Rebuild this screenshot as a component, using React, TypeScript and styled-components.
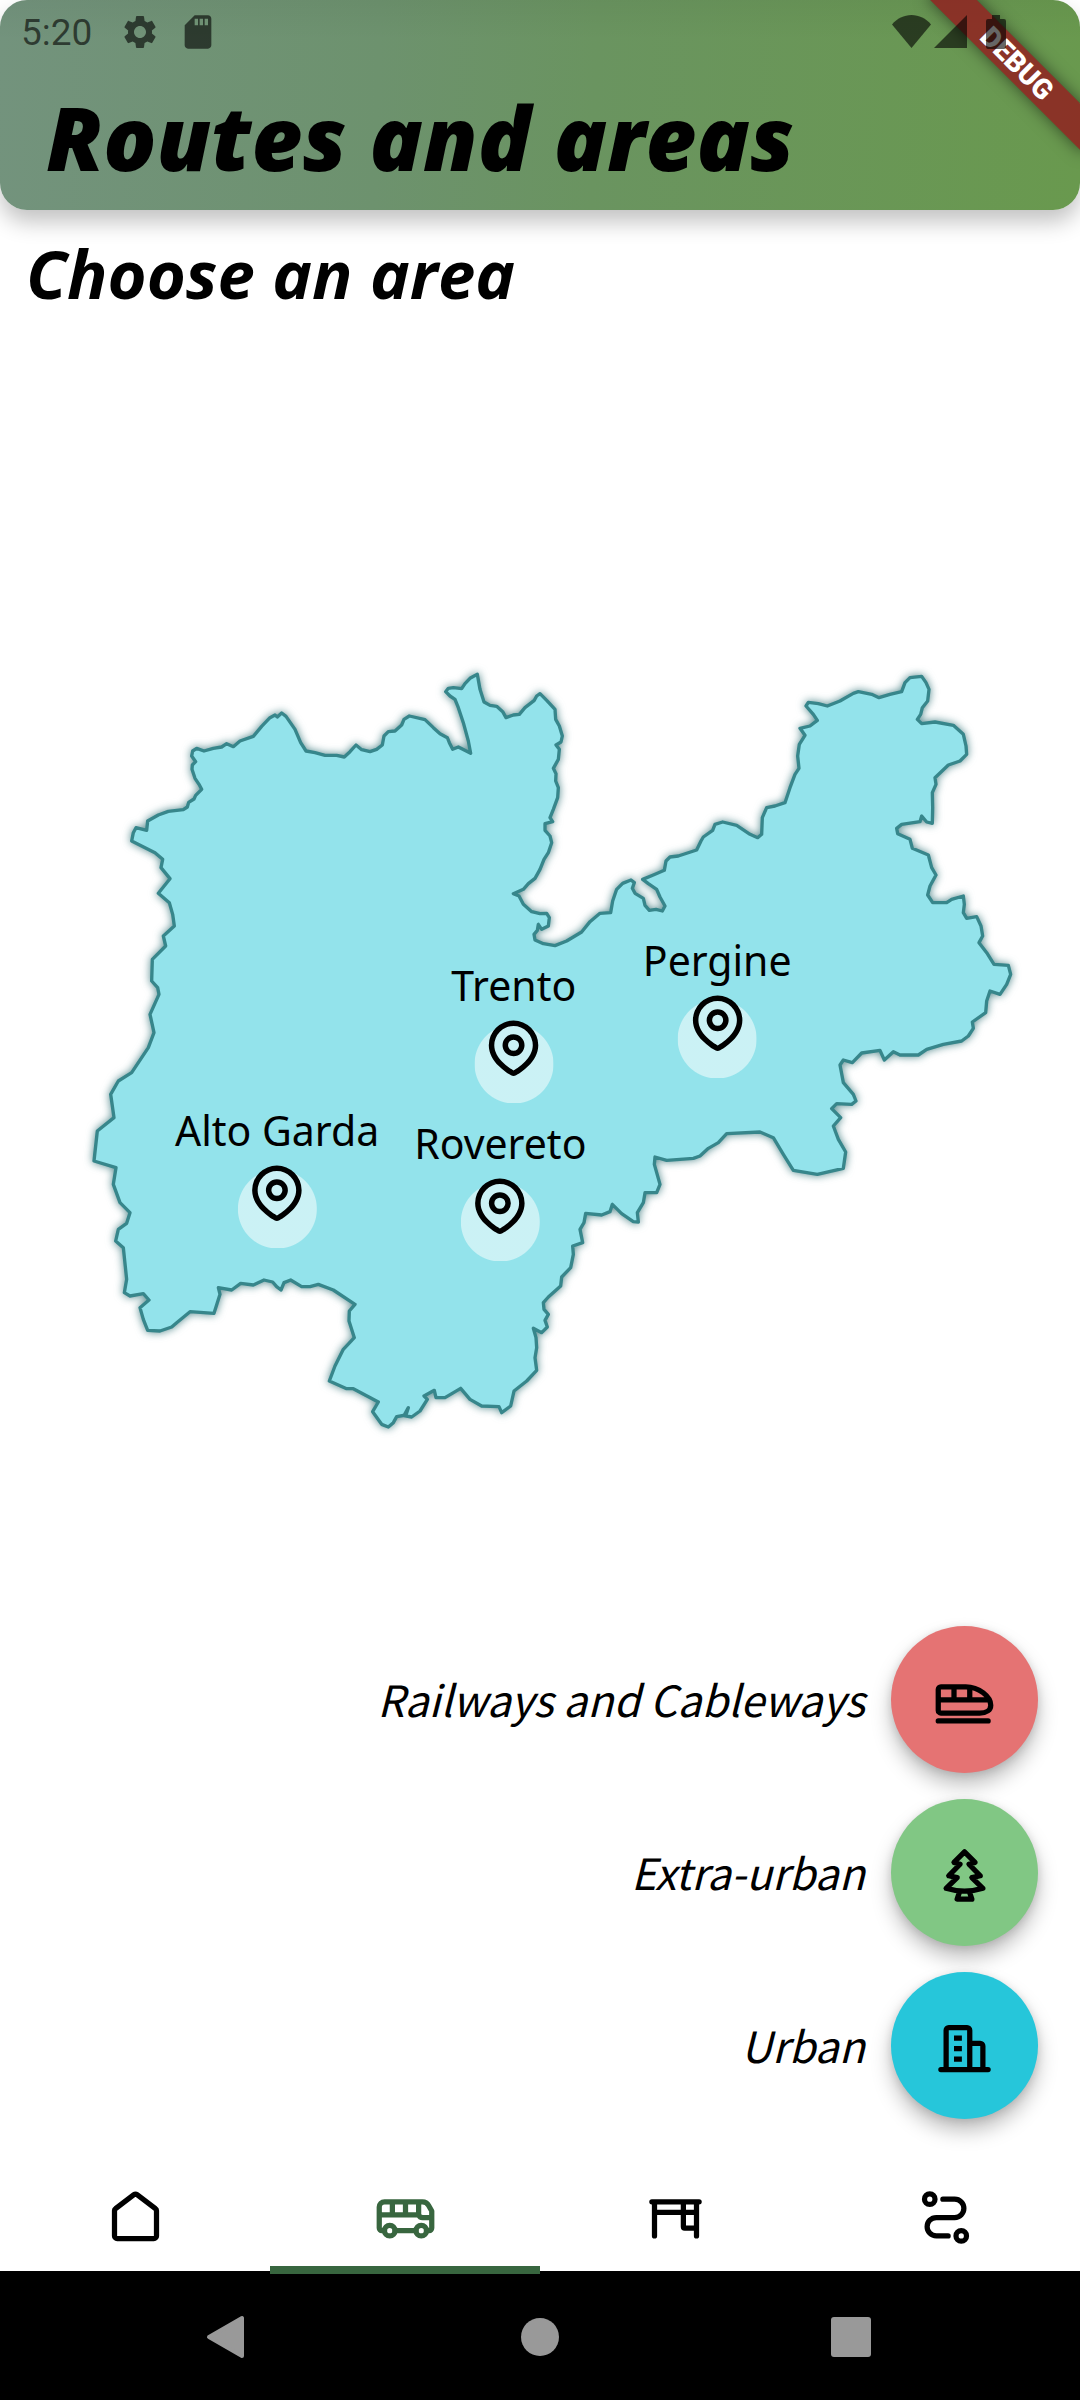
import React from "react";
import styled, { createGlobalStyle } from "styled-components";

const GlobalStyle = createGlobalStyle`
  * { box-sizing: border-box; }
  body { margin: 0; background: #fff; color: #000; font-family: "Noto Sans", "Open Sans", sans-serif; }
  button { border: 0; padding: 0; background: none; color: inherit; font: inherit; cursor: pointer; }
`;

const Page = styled.div`
  position: relative;
  display: flex;
  flex-direction: column;
  min-height: 100vh;
  overflow: hidden;
`;

/* ---------- header ---------- */

const Header = styled.header`
  height: 210px;
  border-radius: 27px;
  background:
    linear-gradient(180deg, rgba(0, 0, 0, 0.04), rgba(0, 0, 0, 0) 40px),
    linear-gradient(92deg, #73937d, #6d926e 35%, #6a9460 55%, #69994e);
  box-shadow: 0 12px 22px rgba(0, 0, 0, 0.24);
`;

const StatusBar = styled.div`
  position: relative;
  z-index: 2;
  display: flex;
  align-items: center;
  height: 63px;
  padding: 0 74px 0 21px;
  color: rgba(0, 0, 0, 0.6);
`;

const Clock = styled.time`
  margin-right: 28px;
  padding-top: 2px;
  font: 400 37px/44px Roboto, sans-serif;
`;

const StatusIcons = styled.div<{ $gap: number }>`
  display: flex;
  align-items: center;
  gap: ${(p) => p.$gap}px;
`;

const Spacer = styled.div`
  flex: 1;
`;

const Title = styled.h1`
  margin: 0;
  padding: 0 46px;
  font: italic 800 88px/148px "Open Sans", sans-serif;
  white-space: nowrap;
`;

const BannerLayer = styled.div`
  position: absolute;
  top: 0;
  right: 0;
  z-index: 1;
  width: 200px;
  height: 200px;
  overflow: hidden;
  pointer-events: none;
`;

const Banner = styled.div`
  position: absolute;
  top: 47px;
  right: -47px;
  width: 220px;
  transform: rotate(45deg);
  background: rgba(150, 18, 26, 0.75);
  box-shadow: 0 0 16px rgba(0, 0, 0, 0.5);
  color: #fff;
  font: 900 28px/33px Roboto, sans-serif;
  text-align: center;
`;

/* ---------- map ---------- */

const Heading = styled.h2`
  margin: 0;
  padding: 0 26px;
  font: italic 700 67px/126px "Open Sans", sans-serif;
`;

const MapArea = styled.section`
  flex: 1;
  display: flex;
  align-items: flex-end;
  padding: 0 100px 145px 80px;
`;

const MapCanvas = styled.div`
  position: relative;
  flex: 1;
`;

const Region = styled.svg`
  display: block;
  width: 100%;
  overflow: visible;
  filter: drop-shadow(0 0 4px rgba(30, 100, 105, 0.75));
`;

const Marker = styled.button<{ $x: number; $y: number }>`
  position: absolute;
  left: ${(p) => p.$x}%;
  top: ${(p) => p.$y}%;
  transform: translate(-50%, -100%);
  display: flex;
  flex-direction: column;
  align-items: center;
  gap: 3px;
  font-size: 41px;
  line-height: 54px;
  white-space: nowrap;
`;

const MarkerDot = styled.span`
  display: grid;
  justify-items: center;
  height: 88px;
  width: 79px;
  background: radial-gradient(circle at 50% 49px, rgba(255, 255, 255, 0.52) 39px, transparent 40px);
`;

/* ---------- actions ---------- */

const Actions = styled.section`
  display: flex;
  flex-direction: column;
  align-items: flex-end;
  gap: 26px;
  padding: 0 42px 44px 0;
`;

const Action = styled.button`
  display: flex;
  align-items: center;
  gap: 26px;
  font-family: "Noto Sans CJK JP", "Noto Sans", sans-serif;
  font-style: italic;
  font-size: 43px;
  line-height: 56px;
`;

const ActionLabel = styled.span`
  padding-bottom: 4px;
`;

const ActionDisc = styled.span<{ $color: string }>`
  display: flex;
  align-items: center;
  justify-content: center;
  width: 147px;
  height: 147px;
  padding-top: 6px;
  border-radius: 50%;
  background: ${(p) => p.$color};
  box-shadow: 0 12px 20px rgba(0, 0, 0, 0.25), 0 2px 8px rgba(0, 0, 0, 0.12);
`;

/* ---------- navigation ---------- */

const TabBar = styled.nav`
  position: relative;
  z-index: 1;
  display: grid;
  grid-template-columns: repeat(4, 1fr);
  height: 108px;
`;

const Tab = styled.a<{ $active: boolean }>`
  display: flex;
  justify-content: center;
  align-items: center;
  height: 111px;
  color: ${(p) => (p.$active ? "#38663f" : "#000")};
  border-bottom: 8px solid ${(p) => (p.$active ? "#38663f" : "transparent")};
  padding-top: 5px;
`;

const SystemBar = styled.div`
  display: grid;
  grid-template-columns: repeat(3, 1fr);
  height: 129px;
  padding: 2px 74px 0;
  background: #000;
  color: #999;
`;

const SystemButton = styled.button`
  display: flex;
  align-items: center;
  justify-content: center;
`;

const Glyph = ({ size = 63, children }: { size?: number; children: React.ReactNode }) => (
  <svg width={size} height={size} viewBox="0 0 24 24" fill="none" stroke="currentColor"
    strokeWidth="2" strokeLinecap="round" strokeLinejoin="round" aria-hidden="true">
    {children}
  </svg>
);

const PinGlyph = () => (
  <svg width="66" height="66" viewBox="0 0 24 24" fill="currentColor" fillRule="evenodd" aria-hidden="true">
    <path d="M12 2a9 9 0 0 1 9 9c0 3.074-1.676 5.59-3.442 7.395a20.4 20.4 0 0 1-2.876 2.416l-.426.29-.2.133-.377.24-.336.205-.416.242a1.87 1.87 0 0 1-1.854 0l-.416-.242-.52-.32-.192-.125-.41-.273a20.6 20.6 0 0 1-3.093-2.566C4.676 16.589 3 14.074 3 11a9 9 0 0 1 9-9m0 2a7 7 0 0 0-7 7c0 2.322 1.272 4.36 2.871 5.996a18 18 0 0 0 2.222 1.91l.458.326.427.288.39.25.343.209.289.169.455-.269.367-.23q.293-.186.627-.417l.458-.326a18 18 0 0 0 2.222-1.91C17.728 15.361 19 13.322 19 11a7 7 0 0 0-7-7m0 3a4 4 0 1 1 0 8 4 4 0 0 1 0-8m0 2a2 2 0 1 0 0 4 2 2 0 0 0 0-4" />
  </svg>
);

const TrainGlyph = () => (
  <Glyph>
    <path d="M3 6h9.500C17.500 6 22 9.800 22 13c0 1.900-1.700 3-4.200 3H3a1 1 0 0 1-1-1V7a1 1 0 0 1 1-1ZM2 11h19M2 19h19" />
    <path d="M8 6v5M14 6v5" strokeLinecap="butt" />
  </Glyph>
);

const TreeGlyph = () => (
  <Glyph>
    <path d="M12 3 8 7l2.300.700-4.300 4.400 3.200.700-4.200 4.100c4.500 1.400 9.500 1.400 14 0l-4.200-4.100 3.200-.700-4.300-4.400L16 7ZM10.100 18.300 9.200 21h5.600l-.9-2.700" />
  </Glyph>
);

const BuildingGlyph = () => (
  <Glyph>
    <path d="M3 20h18M5 20V5a1 1 0 0 1 1-1h7a1 1 0 0 1 1 1v15M14 10h4a1 1 0 0 1 1 1v9" />
    <path d="M8 8h3M8 12h3M8 16h3" strokeLinecap="butt" />
  </Glyph>
);

const HomeGlyph = () => (
  <Glyph>
    <path d="M4 9.300c0-.3.100-.5.400-.7l7-5.300a1 1 0 0 1 1.200 0l7 5.300c.3.200.4.400.4.700V19a1 1 0 0 1-1 1H5a1 1 0 0 1-1-1Z" />
  </Glyph>
);

const BusGlyph = () => (
  <Glyph>
    <path d="M4 17H3a1 1 0 0 1-1-1V8a2 2 0 0 1 2-2h14.500c1 0 1.800.500 2.300 1.400L22 9.500V16a1 1 0 0 1-1 1h-1M8 17h8M2 11h15c.3.700.6 1 1.500 1H22M7 6v5M12 6v5M17 6v5" />
    <circle cx="6" cy="17" r="2" />
    <circle cx="18" cy="17" r="2" />
  </Glyph>
);

const DeskGlyph = () => (
  <Glyph>
    <path d="M3 6h18M4 6v13M20 6v13M4 10h16M15 6v9.500a.5.500 0 0 0 .5.500H20" />
  </Glyph>
);

const RouteGlyph = () => (
  <Glyph>
    <path d="M11 5h4.500a3.500 3.500 0 0 1 0 7h-7a3.500 3.500 0 0 0 0 7H13" />
    <circle cx="6" cy="5" r="2" />
    <circle cx="18" cy="19" r="2" />
  </Glyph>
);

const provinceOutline =
  "M155 600 160 575 168 560 200 568 203 540 235 522 265 511 310 506 322 498 326 484 342 474 347 463 365 445 357 430 345 412 336 385 337 372 347 362 335 345 338 330 350 322 372 330 400 322 425 318 440 308 460 317 480 300 520 286 545 256 570 230 585 222 592 228 605 216 618 226 645 265 662 305 678 330 705 335 735 343 770 343 793 348 810 332 828 312 845 326 870 332 890 325 907 312 912 285 925 272 945 270 965 252 972 235 988 225 1035 236 1060 260 1080 278 1102 290 1108 305 1118 325 1135 318 1172 337 1165 300 1150 245 1135 200 1125 175 1110 165 1097 152 1105 142 1120 140 1145 143 1155 128 1170 112 1192 100 1200 145 1212 183 1230 193 1250 196 1268 212 1278 230 1300 222 1318 220 1335 200 1363 178 1370 165 1380 158 1400 178 1425 205 1427 235 1438 255 1447 285 1443 303 1428 312 1438 325 1435 355 1420 382 1428 398 1427 420 1435 440 1433 470 1420 505 1410 530 1418 542 1395 548 1395 568 1410 585 1415 605 1405 635 1392 655 1380 685 1365 712 1345 728 1330 745 1300 758 1317 765 1330 790 1355 812 1380 818 1400 817 1408 830 1405 855 1385 865 1375 850 1372 868 1362 880 1365 897 1390 908 1425 914 1460 900 1505 873 1530 842 1560 817 1592 815 1598 780 1610 745 1628 727 1653 717 1663 725 1657 742 1665 757 1690 772 1695 793 1708 808 1728 805 1747 810 1755 795 1740 768 1730 745 1705 728 1688 715 1720 702 1753 688 1758 660 1770 648 1795 645 1850 627 1863 600 1870 588 1898 568 1905 550 1928 543 1970 553 2010 580 2033 590 2045 580 2047 530 2060 500 2085 495 2115 485 2130 440 2145 400 2157 382 2153 345 2158 310 2175 283 2160 262 2190 255 2212 238 2200 220 2178 195 2185 184 2215 188 2242 195 2280 180 2320 157 2335 152 2375 160 2397 170 2430 160 2465 152 2475 125 2490 110 2525 106 2538 125 2547 145 2543 180 2527 200 2522 220 2512 235 2525 248 2565 243 2620 253 2650 280 2658 315 2660 340 2640 360 2605 372 2565 410 2568 430 2557 455 2558 500 2557 547 2540 543 2525 525 2520 542 2465 550 2450 562 2453 578 2490 595 2497 622 2545 642 2555 680 2568 702 2550 735 2543 762 2558 785 2600 785 2615 775 2650 765 2653 790 2650 815 2660 832 2690 827 2703 855 2708 885 2697 905 2720 935 2742 970 2785 973 2792 1000 2780 1030 2760 1060 2730 1050 2720 1080 2717 1115 2677 1143 2680 1162 2665 1185 2645 1200 2590 1210 2540 1225 2515 1242 2460 1242 2440 1232 2413 1257 2400 1228 2345 1236 2317 1265 2290 1257 2280 1272 2290 1325 2320 1360 2328 1380 2315 1390 2270 1388 2255 1403 2282 1430 2260 1455 2275 1495 2297 1533 2290 1582 2212 1600 2140 1588 2110 1540 2080 1490 2040 1473 1940 1478 1915 1505 1885 1522 1860 1545 1840 1552 1760 1558 1725 1548 1723 1570 1740 1630 1730 1655 1695 1655 1690 1685 1672 1715 1675 1743 1660 1742 1625 1718 1597 1690 1590 1712 1565 1722 1517 1717 1512 1745 1500 1765 1508 1805 1478 1815 1480 1840 1472 1880 1445 1908 1442 1935 1405 1968 1390 1985 1392 2005 1405 2020 1395 2038 1402 2058 1385 2075 1360 2062 1368 2090 1370 2120 1365 2150 1370 2188 1340 2220 1302 2250 1292 2295 1265 2315 1257 2297 1205 2295 1170 2275 1142 2242 1095 2270 1068 2270 1063 2248 1032 2265 1042 2275 1020 2310 995 2328 972 2324 985 2300 978 2322 950 2327 940 2345 925 2358 905 2350 878 2312 895 2283 820 2243 800 2243 748 2220 765 2175 790 2125 823 2090 807 2040 808 2010 825 1990 760 1947 715 1930 690 1937 665 1937 632 1917 612 1925 603 1947 590 1937 578 1923 552 1917 520 1932 482 1927 455 1947 415 1940 420 1960 402 2017 330 2012 290 2045 275 2058 240 2070 203 2068 190 2035 180 2000 207 1977 190 1958 150 1965 133 1955 140 1915 130 1820 107 1800 115 1765 140 1747 150 1715 120 1685 100 1630 108 1580 42 1560 52 1470 102 1430 92 1360 115 1320 155 1295 205 1220 222 1175 210 1120 237 1060 233 1040 215 1020 217 955 257 915 250 885 283 855 278 820 268 785 235 757 270 713 243 680 248 655 225 635Z";

const areas = [
  { name: "Pergine", x: 70.8, y: 52 },
  { name: "Trento", x: 48.2, y: 55 },
  { name: "Alto Garda", x: 21.9, y: 72.3 },
  { name: "Rovereto", x: 46.7, y: 73.8 },
];

const actions = [
  { name: "Railways and Cableways", color: "#e57373", icon: <TrainGlyph /> },
  { name: "Extra-urban", color: "#81c784", icon: <TreeGlyph /> },
  { name: "Urban", color: "#26c6da", icon: <BuildingGlyph /> },
];

const tabs = [
  { name: "Home", icon: <HomeGlyph /> },
  { name: "Routes", icon: <BusGlyph /> },
  { name: "Stops", icon: <DeskGlyph /> },
  { name: "Trips", icon: <RouteGlyph /> },
];

export default function App() {
  return (
    <Page>
      <GlobalStyle />
      <Header>
        <StatusBar>
          <Clock>5:20</Clock>
          <StatusIcons $gap={18}>
            <svg width="40" height="40" viewBox="0 0 24 24" fill="currentColor" aria-hidden="true">
              <path d="M19.140 12.940c.040-.300.060-.610.060-.940 0-.320-.020-.640-.070-.940l2.030-1.580c.180-.140.230-.410.120-.610l-1.920-3.320c-.120-.220-.370-.290-.590-.220l-2.390.960c-.500-.380-1.030-.700-1.620-.940L14.400 2.810c-.040-.240-.240-.410-.480-.410h-3.840c-.240 0-.430.170-.470.410L9.250 5.350c-.590.240-1.130.570-1.620.940L5.240 5.330c-.220-.080-.470 0-.590.220L2.740 8.870c-.120.210-.080.470.120.610l2.030 1.580c-.050.300-.090.630-.090.940s.020.640.070.940l-2.030 1.580c-.180.140-.230.410-.120.610l1.920 3.320c.120.220.370.290.590.220l2.390-.960c.500.380 1.030.700 1.620.940l.360 2.540c.050.240.240.410.480.410h3.840c.240 0 .440-.170.470-.410l.360-2.540c.590-.240 1.130-.560 1.620-.940l2.390.960c.220.080.470 0 .590-.220l1.920-3.320c.120-.220.070-.470-.120-.610l-2.010-1.580zM12 15.600c-1.980 0-3.600-1.620-3.600-3.600s1.620-3.600 3.600-3.600 3.600 1.620 3.600 3.600-1.620 3.600-3.600 3.600z" />
            </svg>
            <svg width="40" height="40" viewBox="0 0 24 24" fill="currentColor" aria-hidden="true">
              <path d="M18 2h-8L4.020 8 4 20c0 1.100.9 2 2 2h12c1.100 0 2-.9 2-2V4c0-1.100-.9-2-2-2zm-6 6h-2V4h2v4zm3 0h-2V4h2v4zm3 0h-2V4h2v4z" />
            </svg>
          </StatusIcons>
          <Spacer />
          <StatusIcons $gap={3}>
            <svg width="39" height="33" viewBox="0 0 39 33" fill="currentColor" aria-hidden="true">
              <path d="M19.500 33 0 9.500C5 3.500 12 0 19.500 0S34 3.500 39 9.500Z" />
            </svg>
            <svg width="33" height="33" viewBox="0 0 33 33" fill="currentColor" aria-hidden="true">
              <path d="M33 0v33H0Z" />
            </svg>
            <svg width="36" height="34" viewBox="0 0 36 34" fill="currentColor" aria-hidden="true">
              <path d="M22 0h8v4h4q2 0 2 2v26q0 2-2 2H18q-2 0-2-2V6q0-2 2-2h4Z" />
            </svg>
          </StatusIcons>
        </StatusBar>
        <Title>Routes and areas</Title>
      </Header>
      <BannerLayer>
        <Banner>DEBUG</Banner>
      </BannerLayer>

      <Heading>Choose an area</Heading>
      <MapArea>
        <MapCanvas>
          <Region viewBox="0 0 2700 2520" role="img" aria-label="Trentino">
            <path d={provinceOutline} fill="#93e3eb" stroke="#37868b" strokeWidth="10" strokeLinejoin="round" />
          </Region>
          {areas.map((a) => (
            <Marker key={a.name} $x={a.x} $y={a.y}>
              {a.name}
              <MarkerDot>
                <PinGlyph />
              </MarkerDot>
            </Marker>
          ))}
        </MapCanvas>
      </MapArea>

      <Actions>
        {actions.map((a) => (
          <Action key={a.name}>
            <ActionLabel>{a.name}</ActionLabel>
            <ActionDisc $color={a.color}>{a.icon}</ActionDisc>
          </Action>
        ))}
      </Actions>

      <TabBar>
        {tabs.map((t) => (
          <Tab key={t.name} href={"#" + t.name.toLowerCase()} aria-label={t.name} $active={t.name === "Routes"}>
            {t.icon}
          </Tab>
        ))}
      </TabBar>
      <SystemBar>
        <SystemButton aria-label="Back">
          <svg width="46" height="46" viewBox="0 0 46 46" fill="currentColor" stroke="currentColor" strokeWidth="4" strokeLinejoin="round" aria-hidden="true">
            <path d="M36 4v38L3 23Z" />
          </svg>
        </SystemButton>
        <SystemButton aria-label="Home">
          <svg width="38" height="38" viewBox="0 0 38 38" fill="currentColor" aria-hidden="true">
            <circle cx="19" cy="19" r="19" />
          </svg>
        </SystemButton>
        <SystemButton aria-label="Recent apps">
          <svg width="40" height="40" viewBox="0 0 40 40" fill="currentColor" aria-hidden="true">
            <rect width="40" height="40" rx="3" />
          </svg>
        </SystemButton>
      </SystemBar>
    </Page>
  );
}
